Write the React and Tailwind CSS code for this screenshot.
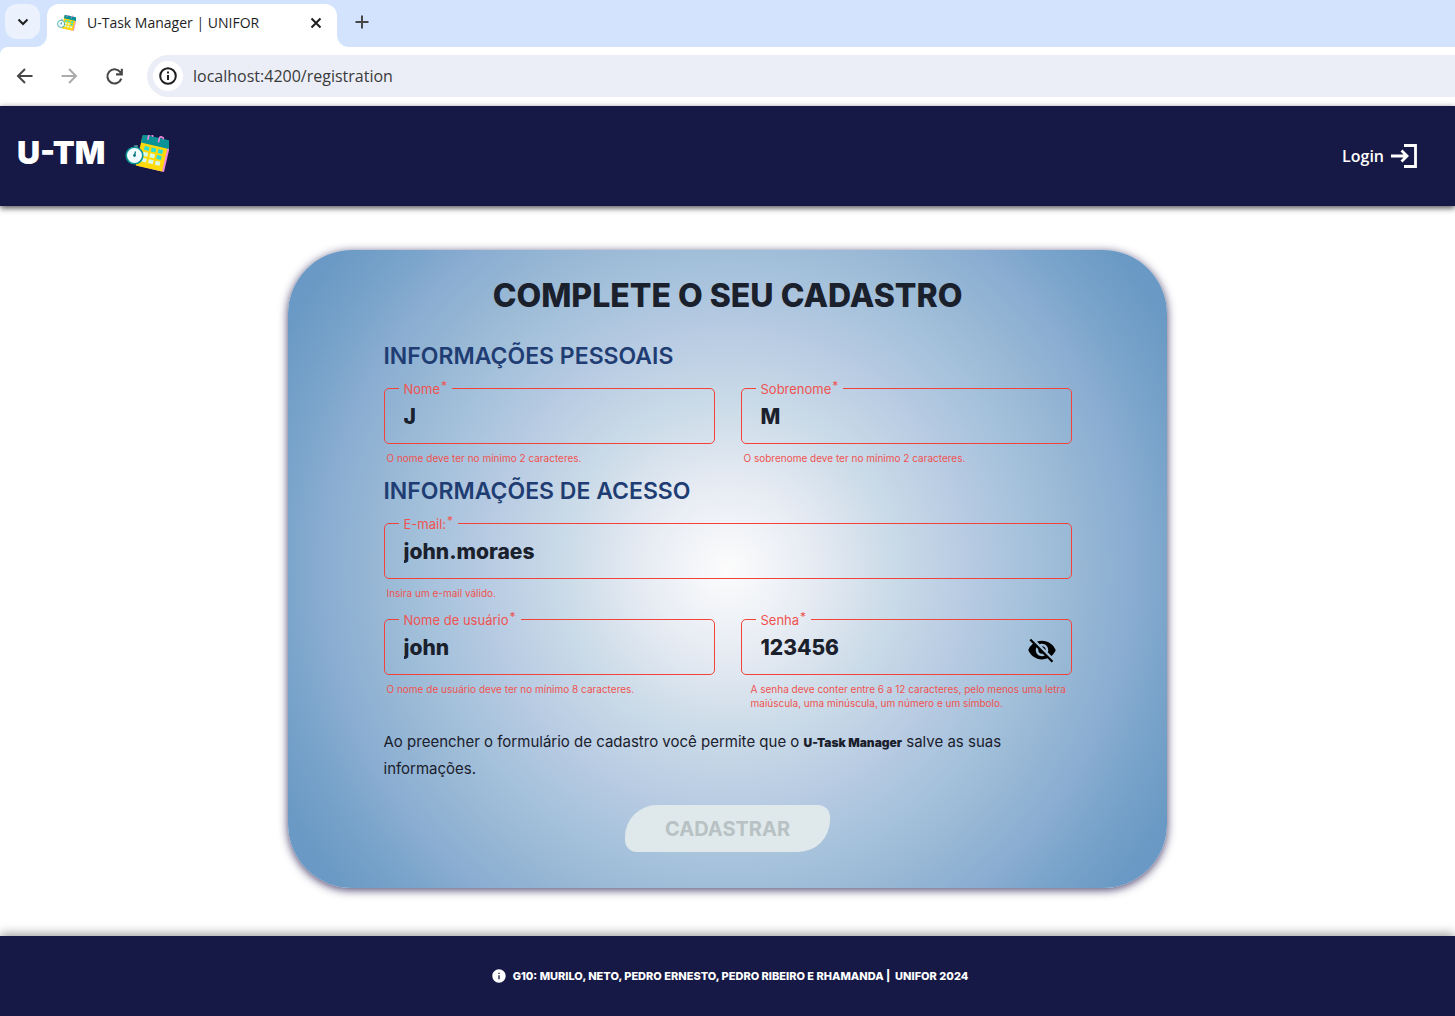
import { useState } from "react";
import { MdInfo, MdVisibilityOff } from "react-icons/md";

function PlannerLogo({ className }) {
  return (
    <svg viewBox="0 0 44 37" className={className} aria-hidden="true">
      <g transform="rotate(13 28 20)">
        <rect x="15.5" y="4" width="27" height="30" fill="#f08bdc" />
        <rect x="13.5" y="4" width="27" height="30" fill="#ffd90a" />
        <rect x="13.5" y="2" width="28.5" height="8.500" fill="#0a9396" />
        <g fill="none" stroke="#f08bdc" strokeWidth="1.600">
          <path d="M19.5 6.500V2.500a2 2 0 0 1 4 0" />
          <path d="M30.500 6.500V2.500a2 2 0 0 1 4 0" />
        </g>
        <g fill="#2fe0d0">
          <rect x="18" y="13" width="4.800" height="4" />
          <rect x="25" y="13" width="4.800" height="4" />
          <rect x="32" y="13" width="4.800" height="4" />
          <rect x="32" y="19" width="4.800" height="4" />
        </g>
        <g fill="#d8fbe9">
          <rect x="18" y="19" width="4.800" height="4" />
          <rect x="25" y="19" width="4.800" height="4" />
          <rect x="18" y="25" width="4.800" height="4" />
          <rect x="25" y="25" width="4.800" height="4" />
          <rect x="32" y="25" width="4.800" height="4" />
        </g>
      </g>
      <path d="M9 11h4M11 10.500v2" stroke="#5f8fa0" strokeWidth="1.500" />
      <circle cx="9.500" cy="20.500" r="8.300" fill="#f2fcff" stroke="#0a9396" strokeWidth="1.600" />
      <path d="M9.500 20.500l1-4" stroke="#0a7a80" strokeWidth="1.300" />
      <circle cx="9.500" cy="20.500" r="1.400" fill="#0a7a80" />
    </svg>
  );
}

function LineIcon({ d, className = "size-[22px]", children }) {
  return (
    <svg viewBox="0 0 22 22" className={className} fill="none" stroke="currentColor" strokeWidth="2" aria-hidden="true">
      <path d={d} />
      {children}
    </svg>
  );
}

function BrowserBar() {
  return (
    <div className="bg-[#d3e3fd] font-['Open_Sans',sans-serif]">
      <div className="flex h-[47px] items-start pl-[5px]">
        <button
          aria-label="Pesquisar guias"
          className="mt-1 flex h-[35px] w-[35px] items-center justify-center rounded-xl bg-[#ebf2fe] text-[#1f1f1f]"
        >
          <LineIcon d="M6.500 8.500L11 13l4.500-4.500" />
        </button>
        <div className="-ml-[5px] flex items-end self-stretch">
          <div className="h-3 w-3 bg-white">
            <div className="h-full rounded-br-xl bg-[#d3e3fd]" />
          </div>
          <div className="mt-1 flex w-[290px] items-center self-stretch rounded-t-xl bg-white pr-2.5 pb-1.5 pl-2.5">
            <PlannerLogo className="h-4 w-[19px]" />
            <span className="ml-[11px] grow text-sm text-[#1f1f1f]">U-Task Manager | UNIFOR</span>
            <button aria-label="Fechar guia" className="text-[#1f1f1f]">
              <LineIcon d="M6.500 6.500l9 9M15.500 6.500l-9 9" />
            </button>
          </div>
          <div className="h-3 w-3 bg-white">
            <div className="h-full rounded-bl-xl bg-[#d3e3fd]" />
          </div>
        </div>
        <button aria-label="Nova guia" className="mt-[11px] ml-0.5 text-[#474747]">
          <LineIcon d="M11 4.500v13M4.500 11h13" />
        </button>
      </div>
      <div className="flex h-[59px] items-center rounded-tl-lg bg-white pb-px pl-3.5">
        <button aria-label="Voltar" className="text-[#474747]">
          <LineIcon d="M18.500 11H4.500M11 4L4 11l7 7" />
        </button>
        <button aria-label="Avançar" disabled className="ml-[22px] text-[#ababab]">
          <LineIcon d="M3.500 11H17.500M11 4l7 7-7 7" />
        </button>
        <button aria-label="Recarregar" className="ml-[23px] text-[#474747]">
          <LineIcon d="M17.500 13a6.800 6.800 0 1 1-1-6.200l1.500 1.700M18 3.500v5.500h-5.500" className="size-[23px]" />
        </button>
        <div className="ml-[21px] flex h-[42px] grow items-center rounded-l-full bg-[#ebeef7] pl-1.5">
          <span className="flex size-[30px] items-center justify-center rounded-full bg-white text-[#1f1f1f]">
            <LineIcon d="M11 10v5M11 6.500v2">
              <circle cx="11" cy="11" r="7.800" />
            </LineIcon>
          </span>
          <input
            aria-label="Endereço"
            defaultValue="localhost:4200/registration"
            className="ml-2.5 grow bg-transparent text-base text-[#3a3a3a] outline-none"
          />
        </div>
      </div>
    </div>
  );
}

function Field({ id, label, value, type = "text", hint, hintClass = "ml-[3px]", className = "", children }) {
  return (
    <div className={className}>
      <fieldset className="flex h-[62px] items-center rounded-[5px] border border-[#f44336] pr-3.5 pl-3.5">
        <legend className="h-3 px-[5px] text-[13px] leading-3 text-[#ef5350]">
          <label htmlFor={id}>
            {label}
            <sup className="-top-1 ml-px text-xs">*</sup>
          </label>
        </legend>
        <input
          id={id}
          type={type}
          defaultValue={value}
          className="w-full min-w-0 bg-transparent pb-1 pl-[5px] text-[21px] leading-7 font-extrabold text-[#1a202c] outline-none"
        />
        {children}
      </fieldset>
      <p className={`mt-[7px] text-[10px] leading-[14px] text-[#ef5350] ${hintClass}`}>{hint}</p>
    </div>
  );
}

export default function App() {
  const [shown, setShown] = useState(true);
  return (
    <div className="flex min-h-screen flex-col bg-white font-['Inter',sans-serif]">
      <BrowserBar />
      <header className="flex h-[100px] items-center justify-between bg-[#161845] pr-[37px] pl-[17px] text-white shadow-[0_2px_6px_rgba(0,0,0,0.7)]">
        <a href="#inicio" className="flex items-center gap-5 pb-1.5">
          <span className="text-[32px] leading-10 font-black">U-TM</span>
          <PlannerLogo className="h-[37px] w-11" />
        </a>
        <a href="#login" className="flex items-center gap-1.5 font-['Open_Sans',sans-serif] text-base font-semibold">
          Login
          <svg viewBox="0 0 28 26" className="h-[26px] w-7" fill="none" stroke="currentColor" strokeWidth="2.800" aria-hidden="true">
            <path d="M14 2.500H25.500V23.500H14M1 13H17M11.500 7.500l5.500 5.500-5.500 5.500" />
          </svg>
        </a>
      </header>

      <main className="flex grow justify-center px-4 pt-11 pb-12">
        <form
          onSubmit={(e) => e.preventDefault()}
          className="flex w-full max-w-[879px] flex-col items-center rounded-[64px] bg-[radial-gradient(circle,#fcfcfc_0%,#e6ebf3_16%,#cbdbe8_30%,#b6cae2_45%,#a3c0da_57%,#95b6d4_66%,#89acd1_75%,#78a3ca_83%,#6999c4_93%)] px-6 shadow-[0_2px_10px_rgba(33,20,75,0.8)]"
        >
          <h1 className="mt-7 text-center text-[32px] leading-9 font-extrabold text-[#1a202c]">
            COMPLETE O SEU CADASTRO
          </h1>
          <div className="mt-7 w-full max-w-[688px]">
            <h2 className="text-[23px] leading-7 font-semibold text-[#1f3d73]">INFORMAÇÕES PESSOAIS</h2>
            <div className="mt-3 grid grid-cols-2 gap-[26px]">
              <Field id="nome" label="Nome" value="J" hint="O nome deve ter no mínimo 2 caracteres." />
              <Field id="sobrenome" label="Sobrenome" value="M" hint="O sobrenome deve ter no mínimo 2 caracteres." />
            </div>
            <h2 className="mt-3 text-[23px] leading-7 font-semibold text-[#1f3d73]">INFORMAÇÕES DE ACESSO</h2>
            <Field className="mt-3" id="email" label="E-mail:" value="john.moraes" hint="Insira um e-mail válido." />
            <div className="mt-[13px] grid grid-cols-2 gap-[26px]">
              <Field id="usuario" label="Nome de usuário" value="john" hint="O nome de usuário deve ter no mínimo 8 caracteres." />
              <Field
                id="senha"
                label="Senha"
                value="123456"
                type={shown ? "text" : "password"}
                hint="A senha deve conter entre 6 a 12 caracteres, pelo menos uma letra maiúscula, uma minúscula, um número e um símbolo."
                hintClass="ml-2.5"
              >
                <button type="button" aria-label="Alternar senha" onClick={() => setShown(!shown)} className="text-black">
                  <MdVisibilityOff size={30} />
                </button>
              </Field>
            </div>
            <p className="mt-[18px] max-w-[660px] text-[15px] leading-[27px] text-[#1a202c]">
              Ao preencher o formulário de cadastro você permite que o{" "}
              <strong className="text-xs font-black">U-Task Manager</strong> salve as suas informações.
            </p>
          </div>
          <button
            type="submit"
            disabled
            className="mt-[23px] mb-[35px] h-[47px] w-[205px] rounded-tl-[32px] rounded-tr-xl rounded-br-[32px] rounded-bl-xl bg-[#dfe9eb] text-xl font-bold text-[#b8c1c3]"
          >
            CADASTRAR
          </button>
        </form>
      </main>

      <footer className="flex h-20 items-center justify-center gap-1.5 bg-[#161845] pl-1 text-[11px] font-extrabold text-white shadow-[0_-2px_10px_rgba(0,0,0,0.4)]">
        <MdInfo size={16} />
        <span>G10: MURILO, NETO, PEDRO ERNESTO, PEDRO RIBEIRO E RHAMANDA |&nbsp; UNIFOR 2024</span>
      </footer>
    </div>
  );
}
